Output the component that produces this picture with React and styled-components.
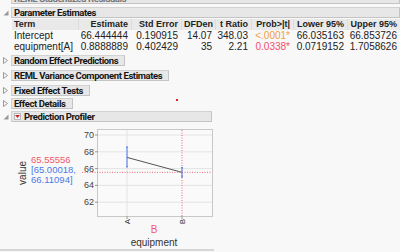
import React from "react";
import styled, { createGlobalStyle } from "styled-components";

const GlobalStyle = createGlobalStyle`
  html, body {
    margin: 0;
    padding: 0;
    background: #f8f8f8;
    overflow: hidden;
  }
  body {
    font-family: "Liberation Sans", Arial, sans-serif;
    color: #222;
  }
`;

const Page = styled.div`
  width: 400px;
  height: 259px;
  overflow: hidden;
  display: flex;
  flex-direction: column;
  margin-top: -7px;
`;

const OutlineRow = styled.div`
  display: flex;
  align-items: center;
  height: 11px;
  flex: none;
  margin-top: ${(p) => p.gap || 0}px;
`;

const Toggle = styled.div`
  width: 11px;
  display: flex;
  justify-content: center;
  align-items: center;
  flex: none;
`;

const Header = styled.div`
  box-sizing: border-box;
  height: 11px;
  display: flex;
  align-items: center;
  gap: 3px;
  padding: 0 ${(p) => (p.w ? 0 : 6)}px 0 2px;
  width: ${(p) => (p.w ? `${p.w}px` : "auto")};
  flex: ${(p) => (p.fill ? 1 : "none")};
  background: #e7e7e7;
  border: 1px solid #d2d2d2;
  border-right-color: #c4c4c4;
  border-bottom-color: #c4c4c4;
  font-family: Roboto, "Liberation Sans", Arial, sans-serif;
  font-size: 9.5px;
  font-weight: bold;
  color: ${(p) => (p.faded ? "#777" : "#161616")};
  letter-spacing: -0.4px;
  white-space: nowrap;
`;

const MenuIcon = styled.span`
  width: 7px;
  height: 7px;
  box-sizing: border-box;
  border: 1px solid #bbb;
  background: #f4f4f4;
  display: flex;
  align-items: center;
  justify-content: center;
`;

const Table = styled.div`
  margin: 1px 0 0 12px;
  display: grid;
  grid-template-columns: 66px 53px 50px 34px 36px 42px 54px 53px;
  font-size: 10px;
  flex: none;
`;

const HeadCell = styled.div`
  height: 11px;
  line-height: 11px;
  background: #e9e9e9;
  font-weight: bold;
  font-size: 9px;
  padding: 0 3px 0 2px;
  text-align: ${(p) => (p.left ? "left" : "right")};
  border-left: ${(p) => (p.left ? "none" : "1px solid #dcdcdc")};
  white-space: nowrap;
`;

const Cell = styled.div`
  height: 11px;
  line-height: 11px;
  padding: 0 3px 0 2px;
  text-align: ${(p) => (p.left ? "left" : "right")};
  color: ${(p) => p.color || "#222"};
  white-space: nowrap;
`;

const ProfilerBody = styled.div`
  display: flex;
  flex: none;
  height: 127px;
  border-bottom: 2px solid #d6d6d6;
  width: 214px;
`;

const LeftPanel = styled.div`
  width: 70px;
  flex: none;
  display: flex;
  align-items: flex-start;
  padding-top: 33px;
  box-sizing: border-box;
`;

const AxisTitle = styled.div`
  writing-mode: vertical-rl;
  transform: rotate(180deg);
  font-size: 10px;
  color: #333;
  margin: 6px 3px 0 17px;
`;

const Values = styled.div`
  display: flex;
  flex-direction: column;
  font-size: 9.5px;
  line-height: 10px;
`;

const Val = styled.span`
  color: ${(p) => p.color};
`;

const Dot = styled.div`
  position: absolute;
  left: 176px;
  top: 99px;
  width: 2px;
  height: 2px;
  background: #e02020;
`;

const y = (v) => 13 + (70 - v) * 8.4;

function Chart() {
  const ax = 57;
  const bx = 112;
  const ticks = [70, 68, 66, 64, 62];
  return (
    <svg width="144" height="127" viewBox="0 0 144 127">
      <rect x="27.5" y="7.5" width="115" height="87" fill="#fafafa" stroke="#c8c8c8" />
      {ticks.map((t) => (
        <g key={t}>
          <line x1="28" x2="142" y1={y(t)} y2={y(t)} stroke="#e3e3e3" />
          <line x1="25" x2="28" y1={y(t)} y2={y(t)} stroke="#999" />
          <text x="24" y={y(t) + 3} fontSize="9" fill="#444" textAnchor="end" fontFamily="Liberation Sans, Arial, sans-serif">
            {t}
          </text>
        </g>
      ))}
      <line x1={ax} x2={ax} y1="8" y2="94" stroke="#e3e3e3" />
      <line x1={bx} x2={bx} y1="8" y2="94" stroke="#e8687a" strokeDasharray="1 1.5" />
      <line x1="12" x2="142" y1={y(65.55556)} y2={y(65.55556)} stroke="#e8687a" strokeDasharray="1 1.5" />
      <line x1={ax} x2={bx} y1={y(67.3333)} y2={y(65.55556)} stroke="#555" />
      <g stroke="#4a7ae8">
        <line x1={ax} x2={ax} y1={y(68.57)} y2={y(66.2)} />
        <line x1={ax - 1} x2={ax + 1} y1={y(68.57)} y2={y(68.57)} />
        <line x1={ax - 1} x2={ax + 1} y1={y(66.2)} y2={y(66.2)} />
        <line x1={bx} x2={bx} y1={y(66.11094)} y2={y(65.00018)} />
        <line x1={bx - 1} x2={bx + 1} y1={y(66.11094)} y2={y(66.11094)} />
        <line x1={bx - 1} x2={bx + 1} y1={y(65.00018)} y2={y(65.00018)} />
      </g>
      <line x1={ax} x2={ax} y1="94" y2="97" stroke="#999" />
      <line x1={bx} x2={bx} y1="94" y2="97" stroke="#999" />
      <text x="0" y="0" fontSize="8" fill="#333" textAnchor="end" fontFamily="Liberation Sans, Arial, sans-serif" transform={`translate(${ax + 3} 97) rotate(-90)`}>
        A
      </text>
      <text x="0" y="0" fontSize="8" fill="#333" textAnchor="end" fontFamily="Liberation Sans, Arial, sans-serif" transform={`translate(${bx + 3} 97) rotate(-90)`}>
        B
      </text>
      <text x="84" y="111" fontSize="10" fill="#f05a6e" textAnchor="middle" fontFamily="Liberation Sans, Arial, sans-serif">
        B
      </text>
      <text x="84" y="124" fontSize="10" fill="#333" textAnchor="middle" fontFamily="Liberation Sans, Arial, sans-serif">
        equipment
      </text>
    </svg>
  );
}

function OpenArrow() {
  return (
    <svg width="6" height="6" viewBox="0 0 6 6">
      <path d="M5.5 0.5 L5.5 5.5 L0.5 5.5 Z" fill="#999" />
    </svg>
  );
}

function ClosedArrow() {
  return (
    <svg width="5" height="7" viewBox="0 0 5 7">
      <path d="M0.5 0.5 L4.5 3.5 L0.5 6.5 Z" fill="none" stroke="#999" />
    </svg>
  );
}

const rows = [
  ["Intercept", "66.444444", "0.190915", "14.07", "348.03", "<.0001*", "66.035163", "66.853726", "#f0a040"],
  ["equipment[A]", "0.8888889", "0.402429", "35", "2.21", "0.0338*", "0.0719152", "1.7058626", "#f0506a"],
];

const heads = ["Term", "Estimate", "Std Error", "DFDen", "t Ratio", "Prob>|t|", "Lower 95%", "Upper 95%"];

const collapsed = [
  ["Random Effect Predictions", 3],
  ["REML Variance Component Estimates", 4],
  ["Fixed Effect Tests", 4],
  ["Effect Details", 2],
];

export default function App() {
  return (
    <>
      <GlobalStyle />
      <Page>
        <OutlineRow>
          <Toggle />
          <Header fill="1" faded>REML Studentized Residuals</Header>
        </OutlineRow>
        <OutlineRow gap={3}>
          <Toggle>
            <OpenArrow />
          </Toggle>
          <Header fill="1">Parameter Estimates</Header>
        </OutlineRow>
        <Table>
          {heads.map((h, i) => (
            <HeadCell key={h} left={i === 0}>
              {h}
            </HeadCell>
          ))}
          {rows.map((r) =>
            r.slice(0, 8).map((c, i) => (
              <Cell key={r[0] + i} left={i === 0} color={i === 5 ? r[8] : undefined}>
                {c}
              </Cell>
            ))
          )}
        </Table>
        {collapsed.map(([label, gap]) => (
          <OutlineRow key={label} gap={gap}>
            <Toggle>
              <ClosedArrow />
            </Toggle>
            <Header>{label}</Header>
          </OutlineRow>
        ))}
        <OutlineRow gap={2}>
          <Toggle>
            <OpenArrow />
          </Toggle>
          <Header w={201}>
            <MenuIcon>
              <svg width="5" height="3" viewBox="0 0 5 3">
                <path d="M0 0 L5 0 L2.5 3 Z" fill="#d02030" />
              </svg>
            </MenuIcon>
            Prediction Profiler
          </Header>
        </OutlineRow>
        <ProfilerBody>
          <LeftPanel>
            <AxisTitle>value</AxisTitle>
            <Values>
              <Val color="#f05a68">65.55556</Val>
              <Val color="#4a7ae8">[65.00018,</Val>
              <Val color="#4a7ae8">66.11094]</Val>
            </Values>
          </LeftPanel>
          <Chart />
        </ProfilerBody>
        <Dot />
      </Page>
    </>
  );
}
